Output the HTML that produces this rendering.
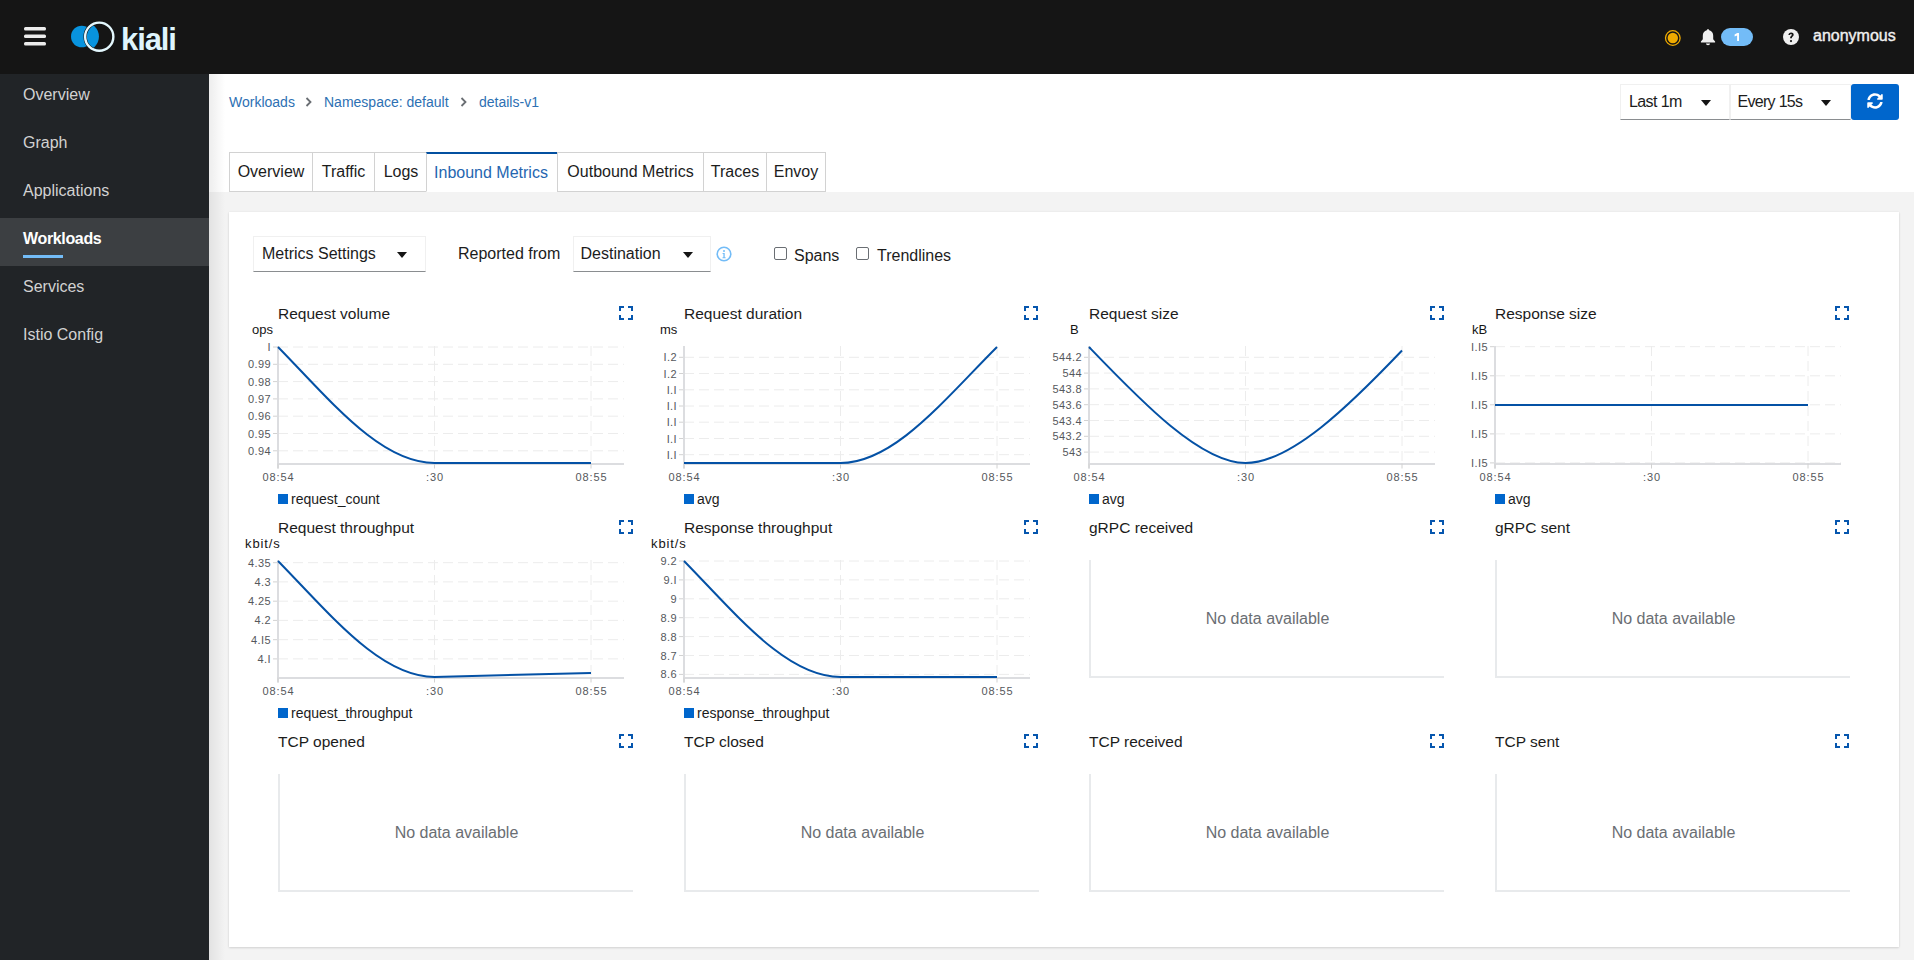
<!DOCTYPE html>
<html><head><meta charset="utf-8"><title>Kiali</title>
<style>
*{box-sizing:border-box}
html,body{margin:0;padding:0}
body{width:1914px;height:960px;overflow:hidden;position:relative;background:#f3f3f3;font-family:"Liberation Sans", sans-serif;color:#1c1c1c}
.abs{position:absolute}
#hdr{position:absolute;left:0;top:0;width:1914px;height:74px;background:#151515}
#side{position:absolute;left:0;top:74px;width:209px;height:886px;background:#212427}
.nav{position:absolute;left:0;width:209px;height:48px;color:#d2d2d2;font-size:16px;line-height:48px;padding-left:23px}
.nav.sel{background:#3c3f42;color:#fff;font-weight:bold}
#topw{position:absolute;left:209px;top:74px;width:1705px;height:118px;background:#fff}
#shadow{position:absolute;left:209px;top:74px;width:16px;height:886px;background:linear-gradient(to right,rgba(3,3,3,0.07),rgba(3,3,3,0))}
.bc{position:absolute;top:94px;font-size:14px;color:#2d70b3;line-height:16px}
.chev{position:absolute;top:97px}
.dd{position:absolute;height:36px;background:#fff;border:1px solid #f0f0f0;border-bottom-color:#8a8d90;font-size:16px;line-height:34px;color:#1c1c1c}
.caret{position:absolute;width:0;height:0;border-left:5px solid transparent;border-right:5px solid transparent;border-top:6px solid #151515}
.tab{position:absolute;top:152px;height:40px;border:1px solid #d2d2d2;background:#fff;font-size:16px;line-height:38px;color:#1c1c1c;text-align:center}
#card{position:absolute;left:229px;top:212px;width:1670px;height:735px;background:#fff;box-shadow:0 1px 2px 0 rgba(3,3,3,0.12),0 0 2px 0 rgba(3,3,3,0.06)}
.ctitle{position:absolute;font-size:15.5px;line-height:18px;color:#1c1c1c;white-space:nowrap}
.unit{position:absolute;font-size:13px;line-height:15px;color:#151515;white-space:nowrap}
.tick{font-family:"Liberation Sans", sans-serif;font-size:11px;fill:#55585c;letter-spacing:0.4px}
.tick.xt{letter-spacing:0.9px}
.one{letter-spacing:-1.2px}
.legend{position:absolute;font-size:14px;line-height:16px;color:#1c1c1c;white-space:nowrap}
.sq{position:absolute;width:10px;height:10px;background:#0066cc}
.nd{position:absolute;width:355px;height:118px;border-left:2px solid #e8eaec;border-bottom:2px solid #e8eaec;}
.nd span{position:absolute;left:0;right:0;top:49.5px;text-align:center;font-size:16px;color:#6a6e73;line-height:18px}
.cb{position:absolute;width:13px;height:13px;border:1px solid #6a6e73;border-radius:2px;background:#fff}
</style></head><body>
<div id="hdr">
  <svg class="abs" style="left:24px;top:26px" width="22" height="20" viewBox="0 0 22 20"><rect x="0" y="1" width="22" height="3.5" rx="1.5" fill="#ececec"/><rect x="0" y="8.5" width="22" height="3.5" rx="1.5" fill="#ececec"/><rect x="0" y="16" width="22" height="3.5" rx="1.5" fill="#ececec"/></svg>
  <svg class="abs" style="left:68px;top:18px" width="52" height="38" viewBox="68 18 52 38">
    <defs><clipPath id="rc"><circle cx="99.25" cy="36.7" r="14.1"/></clipPath></defs>
    <circle cx="81.8" cy="36.5" r="10.8" fill="#0893de"/>
    <circle cx="84.5" cy="36.6" r="14.45" fill="#0893de" clip-path="url(#rc)"/>
    <circle cx="99.25" cy="36.7" r="14.1" fill="none" stroke="#151515" stroke-width="3.4"/>
    <circle cx="99.25" cy="36.7" r="14.1" fill="none" stroke="#e4f8fe" stroke-width="2.4"/>
  </svg>
  <div class="abs" style="left:121px;top:22px;font-size:31px;font-weight:bold;color:#dff5fd;letter-spacing:-1.1px;line-height:36px">kiali</div>
  <svg class="abs" style="left:1664px;top:29px" width="18" height="18" viewBox="0 0 18 18"><circle cx="8.8" cy="9" r="7.3" fill="none" stroke="#f0ab00" stroke-width="1.3"/><circle cx="8.8" cy="9" r="5.2" fill="#f0ab00"/></svg>
  <svg class="abs" style="left:1700px;top:28px" width="16" height="18" viewBox="0 0 16 18"><path d="M8 1.2c.7 0 1.2.5 1.2 1.1 2.6.6 4 2.8 4 5.4v3.6l1.9 2.2v1H.9v-1l1.9-2.2V7.7c0-2.6 1.4-4.8 4-5.4 0-.6.5-1.1 1.2-1.1zM6 15.6h4c0 1.1-.9 1.7-2 1.7s-2-.6-2-1.7z" fill="#f0f0f0"/></svg>
  <div class="abs" style="left:1721px;top:28px;width:32px;height:18px;border-radius:9px;background:#73bcf7"><svg class="abs" style="left:0;top:0" width="32" height="18" viewBox="1721 28 32 18"><path d="M1734.6 34.6L1737.2 33H1739V41H1737.1V35.4L1734.6 36.6Z" fill="#fff"/></svg></div>
  <svg class="abs" style="left:1783px;top:29px" width="16" height="16" viewBox="0 0 16 16"><circle cx="8" cy="8" r="8" fill="#f0f0f0"/><path d="M5.4 6.1c0-1.6 1.2-2.5 2.7-2.5 1.5 0 2.6.9 2.6 2.2 0 1.7-1.8 1.9-1.8 3.1v.4H7.1v-.5c0-1.8 1.7-2 1.7-3 0-.5-.3-.8-.8-.8-.5 0-.9.4-.9 1.1z" fill="#151515"/><circle cx="8" cy="12.1" r="1.1" fill="#151515"/></svg>
  <div class="abs" style="left:1813px;top:27px;font-size:16px;color:#f0f0f0;line-height:18px;-webkit-text-stroke:0.4px #f0f0f0">anonymous</div>
</div>
<div id="side">
  <div class="nav" style="top:-3px">Overview</div>
  <div class="nav" style="top:45px">Graph</div>
  <div class="nav" style="top:93px">Applications</div>
  <div class="nav sel" style="top:144px;height:48px;line-height:41px;letter-spacing:-0.35px">Workloads</div>
  <div class="abs" style="left:23px;top:181px;width:40px;height:3px;background:#73bcf7"></div>
  <div class="nav" style="top:189px">Services</div>
  <div class="nav" style="top:237px">Istio Config</div>
</div>
<div id="topw"></div>
<div id="shadow"></div>
<div class="bc" style="left:229px">Workloads</div>
<svg class="chev" style="left:305px" width="8" height="10" viewBox="0 0 8 10"><path d="M1.5 1l4 4-4 4" fill="none" stroke="#6a6e73" stroke-width="1.8"/></svg>
<div class="bc" style="left:324px">Namespace: default</div>
<svg class="chev" style="left:460px" width="8" height="10" viewBox="0 0 8 10"><path d="M1.5 1l4 4-4 4" fill="none" stroke="#6a6e73" stroke-width="1.8"/></svg>
<div class="bc" style="left:479px">details-v1</div>

<div class="dd" style="left:1620px;top:84px;width:110px;padding-left:8px;letter-spacing:-0.6px">Last 1m<span class="caret" style="left:80px;top:15px"></span></div>
<div class="dd" style="left:1730px;top:84px;width:121px;padding-left:6.5px;letter-spacing:-0.7px">Every 15s<span class="caret" style="left:90px;top:15px"></span></div>
<div class="abs" style="left:1851px;top:84px;width:48px;height:36px;background:#0066cc;border-radius:3px">
  <svg class="abs" style="left:16px;top:9px" width="16" height="16" viewBox="0 0 512 512"><path fill="#fff" d="M370.72 133.28C339.458 104.008 298.888 87.962 255.848 88c-77.458.068-144.328 53.178-162.791 126.85-1.344 5.363-6.122 9.15-11.651 9.15H24.103c-7.498 0-13.194-6.807-11.807-14.176C33.933 94.924 134.813 8 256 8c66.448 0 126.791 26.136 171.315 68.685L463.03 40.97C478.149 25.851 504 36.559 504 57.941V192c0 13.255-10.745 24-24 24H345.941c-21.382 0-32.090-25.851-16.971-40.971l41.750-41.749zM32 296h134.059c21.382 0 32.090 25.851 16.971 40.971l-41.750 41.750c31.262 29.273 71.835 45.319 114.876 45.280 77.418-.070 144.315-53.144 162.787-126.849 1.344-5.363 6.122-9.150 11.651-9.150h57.304c7.498 0 13.194 6.807 11.807 14.176C478.067 417.076 377.187 504 256 504c-66.448 0-126.791-26.136-171.315-68.685L48.970 471.030C33.851 486.149 8 475.441 8 454.059V320c0-13.255 10.745-24 24-24z"/></svg>
</div>

<div class="tab" style="left:229px;width:84px">Overview</div>
<div class="tab" style="left:312px;width:63px">Traffic</div>
<div class="tab" style="left:374px;width:54px">Logs</div>
<div class="tab" style="left:426px;width:132px;color:#2566b0;border-top:2px solid #0350a0;border-bottom-color:#fff;text-indent:-2px;line-height:37px">Inbound Metrics</div>
<div class="tab" style="left:557px;width:147px">Outbound Metrics</div>
<div class="tab" style="left:703px;width:64px">Traces</div>
<div class="tab" style="left:766px;width:60px">Envoy</div>

<div id="card"></div>
<div class="dd" style="left:253px;top:236px;width:173px;padding-left:8px">Metrics Settings<span class="caret" style="left:143px;top:15px"></span></div>
<div class="abs" style="left:458px;top:245px;font-size:16px;line-height:18px">Reported from</div>
<div class="dd" style="left:573px;top:236px;width:138px;padding-left:6.5px">Destination<span class="caret" style="left:109px;top:15px"></span></div>
<svg class="abs" style="left:716px;top:246px" width="16" height="16" viewBox="0 0 16 16"><circle cx="8" cy="8" r="6.8" fill="none" stroke="#73bcf7" stroke-width="1.6"/><circle cx="8" cy="4.9" r="1" fill="#73bcf7"/><path d="M6.6 7h2.1v4.2h.9v1H6.5v-1h.9V8H6.6z" fill="#73bcf7"/></svg>
<div class="cb" style="left:774px;top:247px"></div>
<div class="abs" style="left:794px;top:247px;font-size:16px;line-height:18px">Spans</div>
<div class="cb" style="left:856px;top:247px"></div>
<div class="abs" style="left:877px;top:247px;font-size:16px;line-height:18px">Trendlines</div>

<div class="ctitle" style="left:278px;top:304.5px">Request volume</div>
<svg style="position:absolute;left:619px;top:306px" width="14" height="14" viewBox="0 0 14 14"><path d="M1 5V1H5M9 1H13V5M13 9V13H9M5 13H1V9" fill="none" stroke="#0656ae" stroke-width="2"/></svg>
<div class="unit" style="left:252px;top:322px;">ops</div>
<svg style="position:absolute;left:238px;top:338px" width="400" height="200" viewBox="238 338 400 200"><line x1="434.5" y1="346" x2="434.5" y2="463.5" stroke="#ececec" stroke-width="1" stroke-dasharray="10,5"/><line x1="591" y1="346" x2="591" y2="463.5" stroke="#ececec" stroke-width="1" stroke-dasharray="10,5"/><line x1="278" y1="347.0" x2="624" y2="347.0" stroke="#ececec" stroke-width="1" stroke-dasharray="10,5"/><line x1="273" y1="347.0" x2="278" y2="347.0" stroke="#d2d2d2" stroke-width="1"/><text x="271" y="351.0" class="tick" text-anchor="end">I</text><line x1="278" y1="364.3" x2="624" y2="364.3" stroke="#ececec" stroke-width="1" stroke-dasharray="10,5"/><line x1="273" y1="364.3" x2="278" y2="364.3" stroke="#d2d2d2" stroke-width="1"/><text x="271" y="368.3" class="tick" text-anchor="end">0.99</text><line x1="278" y1="381.6" x2="624" y2="381.6" stroke="#ececec" stroke-width="1" stroke-dasharray="10,5"/><line x1="273" y1="381.6" x2="278" y2="381.6" stroke="#d2d2d2" stroke-width="1"/><text x="271" y="385.6" class="tick" text-anchor="end">0.98</text><line x1="278" y1="398.9" x2="624" y2="398.9" stroke="#ececec" stroke-width="1" stroke-dasharray="10,5"/><line x1="273" y1="398.9" x2="278" y2="398.9" stroke="#d2d2d2" stroke-width="1"/><text x="271" y="402.9" class="tick" text-anchor="end">0.97</text><line x1="278" y1="416.2" x2="624" y2="416.2" stroke="#ececec" stroke-width="1" stroke-dasharray="10,5"/><line x1="273" y1="416.2" x2="278" y2="416.2" stroke="#d2d2d2" stroke-width="1"/><text x="271" y="420.2" class="tick" text-anchor="end">0.96</text><line x1="278" y1="433.5" x2="624" y2="433.5" stroke="#ececec" stroke-width="1" stroke-dasharray="10,5"/><line x1="273" y1="433.5" x2="278" y2="433.5" stroke="#d2d2d2" stroke-width="1"/><text x="271" y="437.5" class="tick" text-anchor="end">0.95</text><line x1="278" y1="450.8" x2="624" y2="450.8" stroke="#ececec" stroke-width="1" stroke-dasharray="10,5"/><line x1="273" y1="450.8" x2="278" y2="450.8" stroke="#d2d2d2" stroke-width="1"/><text x="271" y="454.8" class="tick" text-anchor="end">0.94</text><line x1="278" y1="346" x2="278" y2="468.5" stroke="#dcdde0" stroke-width="2"/><line x1="277" y1="464.0" x2="624" y2="464.0" stroke="#dcdde0" stroke-width="2"/><line x1="278" y1="463.5" x2="278" y2="468.5" stroke="#d2d2d2" stroke-width="1"/><text x="278.5" y="480.5" class="tick xt" text-anchor="middle">08:54</text><line x1="434.5" y1="463.5" x2="434.5" y2="468.5" stroke="#d2d2d2" stroke-width="1"/><text x="435.0" y="480.5" class="tick xt" text-anchor="middle">:30</text><line x1="591" y1="463.5" x2="591" y2="468.5" stroke="#d2d2d2" stroke-width="1"/><text x="591.5" y="480.5" class="tick xt" text-anchor="middle">08:55</text><path d="M278,347 C330,400 380,463 434.5,463 L591,463" fill="none" stroke="#0451a5" stroke-width="2"/></svg>
<div class="sq" style="left:278px;top:494px"></div><div class="legend" style="left:291px;top:491px">request_count</div>
<div class="ctitle" style="left:684px;top:304.5px">Request duration</div>
<svg style="position:absolute;left:1024px;top:306px" width="14" height="14" viewBox="0 0 14 14"><path d="M1 5V1H5M9 1H13V5M13 9V13H9M5 13H1V9" fill="none" stroke="#0656ae" stroke-width="2"/></svg>
<div class="unit" style="left:660px;top:322px;">ms</div>
<svg style="position:absolute;left:644px;top:338px" width="400" height="200" viewBox="644 338 400 200"><line x1="840.5" y1="346" x2="840.5" y2="463.5" stroke="#ececec" stroke-width="1" stroke-dasharray="10,5"/><line x1="997" y1="346" x2="997" y2="463.5" stroke="#ececec" stroke-width="1" stroke-dasharray="10,5"/><line x1="684" y1="357.3" x2="1030" y2="357.3" stroke="#ececec" stroke-width="1" stroke-dasharray="10,5"/><line x1="679" y1="357.3" x2="684" y2="357.3" stroke="#d2d2d2" stroke-width="1"/><text x="677" y="361.3" class="tick" text-anchor="end">I.2</text><line x1="684" y1="373.5" x2="1030" y2="373.5" stroke="#ececec" stroke-width="1" stroke-dasharray="10,5"/><line x1="679" y1="373.5" x2="684" y2="373.5" stroke="#d2d2d2" stroke-width="1"/><text x="677" y="377.5" class="tick" text-anchor="end">I.2</text><line x1="684" y1="389.8" x2="1030" y2="389.8" stroke="#ececec" stroke-width="1" stroke-dasharray="10,5"/><line x1="679" y1="389.8" x2="684" y2="389.8" stroke="#d2d2d2" stroke-width="1"/><text x="677" y="393.8" class="tick" text-anchor="end">I.I</text><line x1="684" y1="406.0" x2="1030" y2="406.0" stroke="#ececec" stroke-width="1" stroke-dasharray="10,5"/><line x1="679" y1="406.0" x2="684" y2="406.0" stroke="#d2d2d2" stroke-width="1"/><text x="677" y="410.0" class="tick" text-anchor="end">I.I</text><line x1="684" y1="422.2" x2="1030" y2="422.2" stroke="#ececec" stroke-width="1" stroke-dasharray="10,5"/><line x1="679" y1="422.2" x2="684" y2="422.2" stroke="#d2d2d2" stroke-width="1"/><text x="677" y="426.2" class="tick" text-anchor="end">I.I</text><line x1="684" y1="438.5" x2="1030" y2="438.5" stroke="#ececec" stroke-width="1" stroke-dasharray="10,5"/><line x1="679" y1="438.5" x2="684" y2="438.5" stroke="#d2d2d2" stroke-width="1"/><text x="677" y="442.5" class="tick" text-anchor="end">I.I</text><line x1="684" y1="454.7" x2="1030" y2="454.7" stroke="#ececec" stroke-width="1" stroke-dasharray="10,5"/><line x1="679" y1="454.7" x2="684" y2="454.7" stroke="#d2d2d2" stroke-width="1"/><text x="677" y="458.7" class="tick" text-anchor="end">I.I</text><line x1="684" y1="346" x2="684" y2="468.5" stroke="#dcdde0" stroke-width="2"/><line x1="683" y1="464.0" x2="1030" y2="464.0" stroke="#dcdde0" stroke-width="2"/><line x1="684" y1="463.5" x2="684" y2="468.5" stroke="#d2d2d2" stroke-width="1"/><text x="684.5" y="480.5" class="tick xt" text-anchor="middle">08:54</text><line x1="840.5" y1="463.5" x2="840.5" y2="468.5" stroke="#d2d2d2" stroke-width="1"/><text x="841.0" y="480.5" class="tick xt" text-anchor="middle">:30</text><line x1="997" y1="463.5" x2="997" y2="468.5" stroke="#d2d2d2" stroke-width="1"/><text x="997.5" y="480.5" class="tick xt" text-anchor="middle">08:55</text><path d="M684,463 L840.5,463 C894,463 944,400 997,347" fill="none" stroke="#0451a5" stroke-width="2"/></svg>
<div class="sq" style="left:684px;top:494px"></div><div class="legend" style="left:697px;top:491px">avg</div>
<div class="ctitle" style="left:1089px;top:304.5px">Request size</div>
<svg style="position:absolute;left:1430px;top:306px" width="14" height="14" viewBox="0 0 14 14"><path d="M1 5V1H5M9 1H13V5M13 9V13H9M5 13H1V9" fill="none" stroke="#0656ae" stroke-width="2"/></svg>
<div class="unit" style="left:1070px;top:322px;">B</div>
<svg style="position:absolute;left:1049px;top:338px" width="400" height="200" viewBox="1049 338 400 200"><line x1="1245.5" y1="346" x2="1245.5" y2="463.5" stroke="#ececec" stroke-width="1" stroke-dasharray="10,5"/><line x1="1402" y1="346" x2="1402" y2="463.5" stroke="#ececec" stroke-width="1" stroke-dasharray="10,5"/><line x1="1089" y1="357.3" x2="1435" y2="357.3" stroke="#ececec" stroke-width="1" stroke-dasharray="10,5"/><line x1="1084" y1="357.3" x2="1089" y2="357.3" stroke="#d2d2d2" stroke-width="1"/><text x="1082" y="361.3" class="tick" text-anchor="end">544.2</text><line x1="1089" y1="373.1" x2="1435" y2="373.1" stroke="#ececec" stroke-width="1" stroke-dasharray="10,5"/><line x1="1084" y1="373.1" x2="1089" y2="373.1" stroke="#d2d2d2" stroke-width="1"/><text x="1082" y="377.1" class="tick" text-anchor="end">544</text><line x1="1089" y1="388.9" x2="1435" y2="388.9" stroke="#ececec" stroke-width="1" stroke-dasharray="10,5"/><line x1="1084" y1="388.9" x2="1089" y2="388.9" stroke="#d2d2d2" stroke-width="1"/><text x="1082" y="392.9" class="tick" text-anchor="end">543.8</text><line x1="1089" y1="404.7" x2="1435" y2="404.7" stroke="#ececec" stroke-width="1" stroke-dasharray="10,5"/><line x1="1084" y1="404.7" x2="1089" y2="404.7" stroke="#d2d2d2" stroke-width="1"/><text x="1082" y="408.7" class="tick" text-anchor="end">543.6</text><line x1="1089" y1="420.5" x2="1435" y2="420.5" stroke="#ececec" stroke-width="1" stroke-dasharray="10,5"/><line x1="1084" y1="420.5" x2="1089" y2="420.5" stroke="#d2d2d2" stroke-width="1"/><text x="1082" y="424.5" class="tick" text-anchor="end">543.4</text><line x1="1089" y1="436.3" x2="1435" y2="436.3" stroke="#ececec" stroke-width="1" stroke-dasharray="10,5"/><line x1="1084" y1="436.3" x2="1089" y2="436.3" stroke="#d2d2d2" stroke-width="1"/><text x="1082" y="440.3" class="tick" text-anchor="end">543.2</text><line x1="1089" y1="452.1" x2="1435" y2="452.1" stroke="#ececec" stroke-width="1" stroke-dasharray="10,5"/><line x1="1084" y1="452.1" x2="1089" y2="452.1" stroke="#d2d2d2" stroke-width="1"/><text x="1082" y="456.1" class="tick" text-anchor="end">543</text><line x1="1089" y1="346" x2="1089" y2="468.5" stroke="#dcdde0" stroke-width="2"/><line x1="1088" y1="464.0" x2="1435" y2="464.0" stroke="#dcdde0" stroke-width="2"/><line x1="1089" y1="463.5" x2="1089" y2="468.5" stroke="#d2d2d2" stroke-width="1"/><text x="1089.5" y="480.5" class="tick xt" text-anchor="middle">08:54</text><line x1="1245.5" y1="463.5" x2="1245.5" y2="468.5" stroke="#d2d2d2" stroke-width="1"/><text x="1246.0" y="480.5" class="tick xt" text-anchor="middle">:30</text><line x1="1402" y1="463.5" x2="1402" y2="468.5" stroke="#d2d2d2" stroke-width="1"/><text x="1402.5" y="480.5" class="tick xt" text-anchor="middle">08:55</text><path d="M1089,347 C1140,400 1200,463 1245.5,463 C1291,463 1350,405 1402,350.5" fill="none" stroke="#0451a5" stroke-width="2"/></svg>
<div class="sq" style="left:1089px;top:494px"></div><div class="legend" style="left:1102px;top:491px">avg</div>
<div class="ctitle" style="left:1495px;top:304.5px">Response size</div>
<svg style="position:absolute;left:1835px;top:306px" width="14" height="14" viewBox="0 0 14 14"><path d="M1 5V1H5M9 1H13V5M13 9V13H9M5 13H1V9" fill="none" stroke="#0656ae" stroke-width="2"/></svg>
<div class="unit" style="left:1472px;top:322px;">kB</div>
<svg style="position:absolute;left:1455px;top:338px" width="400" height="200" viewBox="1455 338 400 200"><line x1="1651.5" y1="346" x2="1651.5" y2="463.5" stroke="#ececec" stroke-width="1" stroke-dasharray="10,5"/><line x1="1808" y1="346" x2="1808" y2="463.5" stroke="#ececec" stroke-width="1" stroke-dasharray="10,5"/><line x1="1495" y1="346.7" x2="1841" y2="346.7" stroke="#ececec" stroke-width="1" stroke-dasharray="10,5"/><line x1="1490" y1="346.7" x2="1495" y2="346.7" stroke="#d2d2d2" stroke-width="1"/><text x="1488" y="350.7" class="tick" text-anchor="end">I.I5</text><line x1="1495" y1="375.8" x2="1841" y2="375.8" stroke="#ececec" stroke-width="1" stroke-dasharray="10,5"/><line x1="1490" y1="375.8" x2="1495" y2="375.8" stroke="#d2d2d2" stroke-width="1"/><text x="1488" y="379.8" class="tick" text-anchor="end">I.I5</text><line x1="1495" y1="404.8" x2="1841" y2="404.8" stroke="#ececec" stroke-width="1" stroke-dasharray="10,5"/><line x1="1490" y1="404.8" x2="1495" y2="404.8" stroke="#d2d2d2" stroke-width="1"/><text x="1488" y="408.8" class="tick" text-anchor="end">I.I5</text><line x1="1495" y1="433.9" x2="1841" y2="433.9" stroke="#ececec" stroke-width="1" stroke-dasharray="10,5"/><line x1="1490" y1="433.9" x2="1495" y2="433.9" stroke="#d2d2d2" stroke-width="1"/><text x="1488" y="437.9" class="tick" text-anchor="end">I.I5</text><line x1="1495" y1="462.9" x2="1841" y2="462.9" stroke="#ececec" stroke-width="1" stroke-dasharray="10,5"/><line x1="1490" y1="462.9" x2="1495" y2="462.9" stroke="#d2d2d2" stroke-width="1"/><text x="1488" y="466.9" class="tick" text-anchor="end">I.I5</text><line x1="1495" y1="346" x2="1495" y2="468.5" stroke="#dcdde0" stroke-width="2"/><line x1="1494" y1="464.0" x2="1841" y2="464.0" stroke="#dcdde0" stroke-width="2"/><line x1="1495" y1="463.5" x2="1495" y2="468.5" stroke="#d2d2d2" stroke-width="1"/><text x="1495.5" y="480.5" class="tick xt" text-anchor="middle">08:54</text><line x1="1651.5" y1="463.5" x2="1651.5" y2="468.5" stroke="#d2d2d2" stroke-width="1"/><text x="1652.0" y="480.5" class="tick xt" text-anchor="middle">:30</text><line x1="1808" y1="463.5" x2="1808" y2="468.5" stroke="#d2d2d2" stroke-width="1"/><text x="1808.5" y="480.5" class="tick xt" text-anchor="middle">08:55</text><path d="M1495,405 L1808,405" fill="none" stroke="#0451a5" stroke-width="2"/></svg>
<div class="sq" style="left:1495px;top:494px"></div><div class="legend" style="left:1508px;top:491px">avg</div>
<div class="ctitle" style="left:278px;top:518.5px">Request throughput</div>
<svg style="position:absolute;left:619px;top:520px" width="14" height="14" viewBox="0 0 14 14"><path d="M1 5V1H5M9 1H13V5M13 9V13H9M5 13H1V9" fill="none" stroke="#0656ae" stroke-width="2"/></svg>
<div class="unit" style="left:245px;top:536px;letter-spacing:0.9px;">kbit/s</div>
<svg style="position:absolute;left:238px;top:552px" width="400" height="200" viewBox="238 552 400 200"><line x1="434.5" y1="560" x2="434.5" y2="677.5" stroke="#ececec" stroke-width="1" stroke-dasharray="10,5"/><line x1="591" y1="560" x2="591" y2="677.5" stroke="#ececec" stroke-width="1" stroke-dasharray="10,5"/><line x1="278" y1="562.7" x2="624" y2="562.7" stroke="#ececec" stroke-width="1" stroke-dasharray="10,5"/><line x1="273" y1="562.7" x2="278" y2="562.7" stroke="#d2d2d2" stroke-width="1"/><text x="271" y="566.7" class="tick" text-anchor="end">4.35</text><line x1="278" y1="581.9" x2="624" y2="581.9" stroke="#ececec" stroke-width="1" stroke-dasharray="10,5"/><line x1="273" y1="581.9" x2="278" y2="581.9" stroke="#d2d2d2" stroke-width="1"/><text x="271" y="585.9" class="tick" text-anchor="end">4.3</text><line x1="278" y1="601.2" x2="624" y2="601.2" stroke="#ececec" stroke-width="1" stroke-dasharray="10,5"/><line x1="273" y1="601.2" x2="278" y2="601.2" stroke="#d2d2d2" stroke-width="1"/><text x="271" y="605.2" class="tick" text-anchor="end">4.25</text><line x1="278" y1="620.4" x2="624" y2="620.4" stroke="#ececec" stroke-width="1" stroke-dasharray="10,5"/><line x1="273" y1="620.4" x2="278" y2="620.4" stroke="#d2d2d2" stroke-width="1"/><text x="271" y="624.4" class="tick" text-anchor="end">4.2</text><line x1="278" y1="639.7" x2="624" y2="639.7" stroke="#ececec" stroke-width="1" stroke-dasharray="10,5"/><line x1="273" y1="639.7" x2="278" y2="639.7" stroke="#d2d2d2" stroke-width="1"/><text x="271" y="643.7" class="tick" text-anchor="end">4.I5</text><line x1="278" y1="658.9" x2="624" y2="658.9" stroke="#ececec" stroke-width="1" stroke-dasharray="10,5"/><line x1="273" y1="658.9" x2="278" y2="658.9" stroke="#d2d2d2" stroke-width="1"/><text x="271" y="662.9" class="tick" text-anchor="end">4.I</text><line x1="278" y1="560" x2="278" y2="682.5" stroke="#dcdde0" stroke-width="2"/><line x1="277" y1="678.0" x2="624" y2="678.0" stroke="#dcdde0" stroke-width="2"/><line x1="278" y1="677.5" x2="278" y2="682.5" stroke="#d2d2d2" stroke-width="1"/><text x="278.5" y="694.5" class="tick xt" text-anchor="middle">08:54</text><line x1="434.5" y1="677.5" x2="434.5" y2="682.5" stroke="#d2d2d2" stroke-width="1"/><text x="435.0" y="694.5" class="tick xt" text-anchor="middle">:30</text><line x1="591" y1="677.5" x2="591" y2="682.5" stroke="#d2d2d2" stroke-width="1"/><text x="591.5" y="694.5" class="tick xt" text-anchor="middle">08:55</text><path d="M278,561 C330,614 380,677 434.5,677 L591,673" fill="none" stroke="#0451a5" stroke-width="2"/></svg>
<div class="sq" style="left:278px;top:708px"></div><div class="legend" style="left:291px;top:705px">request_throughput</div>
<div class="ctitle" style="left:684px;top:518.5px">Response throughput</div>
<svg style="position:absolute;left:1024px;top:520px" width="14" height="14" viewBox="0 0 14 14"><path d="M1 5V1H5M9 1H13V5M13 9V13H9M5 13H1V9" fill="none" stroke="#0656ae" stroke-width="2"/></svg>
<div class="unit" style="left:651px;top:536px;letter-spacing:0.9px;">kbit/s</div>
<svg style="position:absolute;left:644px;top:552px" width="400" height="200" viewBox="644 552 400 200"><line x1="840.5" y1="560" x2="840.5" y2="677.5" stroke="#ececec" stroke-width="1" stroke-dasharray="10,5"/><line x1="997" y1="560" x2="997" y2="677.5" stroke="#ececec" stroke-width="1" stroke-dasharray="10,5"/><line x1="684" y1="561.0" x2="1030" y2="561.0" stroke="#ececec" stroke-width="1" stroke-dasharray="10,5"/><line x1="679" y1="561.0" x2="684" y2="561.0" stroke="#d2d2d2" stroke-width="1"/><text x="677" y="565.0" class="tick" text-anchor="end">9.2</text><line x1="684" y1="579.9" x2="1030" y2="579.9" stroke="#ececec" stroke-width="1" stroke-dasharray="10,5"/><line x1="679" y1="579.9" x2="684" y2="579.9" stroke="#d2d2d2" stroke-width="1"/><text x="677" y="583.9" class="tick" text-anchor="end">9.I</text><line x1="684" y1="598.8" x2="1030" y2="598.8" stroke="#ececec" stroke-width="1" stroke-dasharray="10,5"/><line x1="679" y1="598.8" x2="684" y2="598.8" stroke="#d2d2d2" stroke-width="1"/><text x="677" y="602.8" class="tick" text-anchor="end">9</text><line x1="684" y1="617.7" x2="1030" y2="617.7" stroke="#ececec" stroke-width="1" stroke-dasharray="10,5"/><line x1="679" y1="617.7" x2="684" y2="617.7" stroke="#d2d2d2" stroke-width="1"/><text x="677" y="621.7" class="tick" text-anchor="end">8.9</text><line x1="684" y1="636.6" x2="1030" y2="636.6" stroke="#ececec" stroke-width="1" stroke-dasharray="10,5"/><line x1="679" y1="636.6" x2="684" y2="636.6" stroke="#d2d2d2" stroke-width="1"/><text x="677" y="640.6" class="tick" text-anchor="end">8.8</text><line x1="684" y1="655.5" x2="1030" y2="655.5" stroke="#ececec" stroke-width="1" stroke-dasharray="10,5"/><line x1="679" y1="655.5" x2="684" y2="655.5" stroke="#d2d2d2" stroke-width="1"/><text x="677" y="659.5" class="tick" text-anchor="end">8.7</text><line x1="684" y1="674.4" x2="1030" y2="674.4" stroke="#ececec" stroke-width="1" stroke-dasharray="10,5"/><line x1="679" y1="674.4" x2="684" y2="674.4" stroke="#d2d2d2" stroke-width="1"/><text x="677" y="678.4" class="tick" text-anchor="end">8.6</text><line x1="684" y1="560" x2="684" y2="682.5" stroke="#dcdde0" stroke-width="2"/><line x1="683" y1="678.0" x2="1030" y2="678.0" stroke="#dcdde0" stroke-width="2"/><line x1="684" y1="677.5" x2="684" y2="682.5" stroke="#d2d2d2" stroke-width="1"/><text x="684.5" y="694.5" class="tick xt" text-anchor="middle">08:54</text><line x1="840.5" y1="677.5" x2="840.5" y2="682.5" stroke="#d2d2d2" stroke-width="1"/><text x="841.0" y="694.5" class="tick xt" text-anchor="middle">:30</text><line x1="997" y1="677.5" x2="997" y2="682.5" stroke="#d2d2d2" stroke-width="1"/><text x="997.5" y="694.5" class="tick xt" text-anchor="middle">08:55</text><path d="M684,561 C736,614 786,677 840.5,677 L997,677" fill="none" stroke="#0451a5" stroke-width="2"/></svg>
<div class="sq" style="left:684px;top:708px"></div><div class="legend" style="left:697px;top:705px">response_throughput</div>
<div class="ctitle" style="left:1089px;top:518.5px">gRPC received</div>
<svg style="position:absolute;left:1430px;top:520px" width="14" height="14" viewBox="0 0 14 14"><path d="M1 5V1H5M9 1H13V5M13 9V13H9M5 13H1V9" fill="none" stroke="#0656ae" stroke-width="2"/></svg>
<div class="nd" style="left:1089px;top:560px"><span>No data available</span></div>
<div class="ctitle" style="left:1495px;top:518.5px">gRPC sent</div>
<svg style="position:absolute;left:1835px;top:520px" width="14" height="14" viewBox="0 0 14 14"><path d="M1 5V1H5M9 1H13V5M13 9V13H9M5 13H1V9" fill="none" stroke="#0656ae" stroke-width="2"/></svg>
<div class="nd" style="left:1495px;top:560px"><span>No data available</span></div>
<div class="ctitle" style="left:278px;top:732.5px">TCP opened</div>
<svg style="position:absolute;left:619px;top:734px" width="14" height="14" viewBox="0 0 14 14"><path d="M1 5V1H5M9 1H13V5M13 9V13H9M5 13H1V9" fill="none" stroke="#0656ae" stroke-width="2"/></svg>
<div class="nd" style="left:278px;top:774px"><span>No data available</span></div>
<div class="ctitle" style="left:684px;top:732.5px">TCP closed</div>
<svg style="position:absolute;left:1024px;top:734px" width="14" height="14" viewBox="0 0 14 14"><path d="M1 5V1H5M9 1H13V5M13 9V13H9M5 13H1V9" fill="none" stroke="#0656ae" stroke-width="2"/></svg>
<div class="nd" style="left:684px;top:774px"><span>No data available</span></div>
<div class="ctitle" style="left:1089px;top:732.5px">TCP received</div>
<svg style="position:absolute;left:1430px;top:734px" width="14" height="14" viewBox="0 0 14 14"><path d="M1 5V1H5M9 1H13V5M13 9V13H9M5 13H1V9" fill="none" stroke="#0656ae" stroke-width="2"/></svg>
<div class="nd" style="left:1089px;top:774px"><span>No data available</span></div>
<div class="ctitle" style="left:1495px;top:732.5px">TCP sent</div>
<svg style="position:absolute;left:1835px;top:734px" width="14" height="14" viewBox="0 0 14 14"><path d="M1 5V1H5M9 1H13V5M13 9V13H9M5 13H1V9" fill="none" stroke="#0656ae" stroke-width="2"/></svg>
<div class="nd" style="left:1495px;top:774px"><span>No data available</span></div>
</body></html>
